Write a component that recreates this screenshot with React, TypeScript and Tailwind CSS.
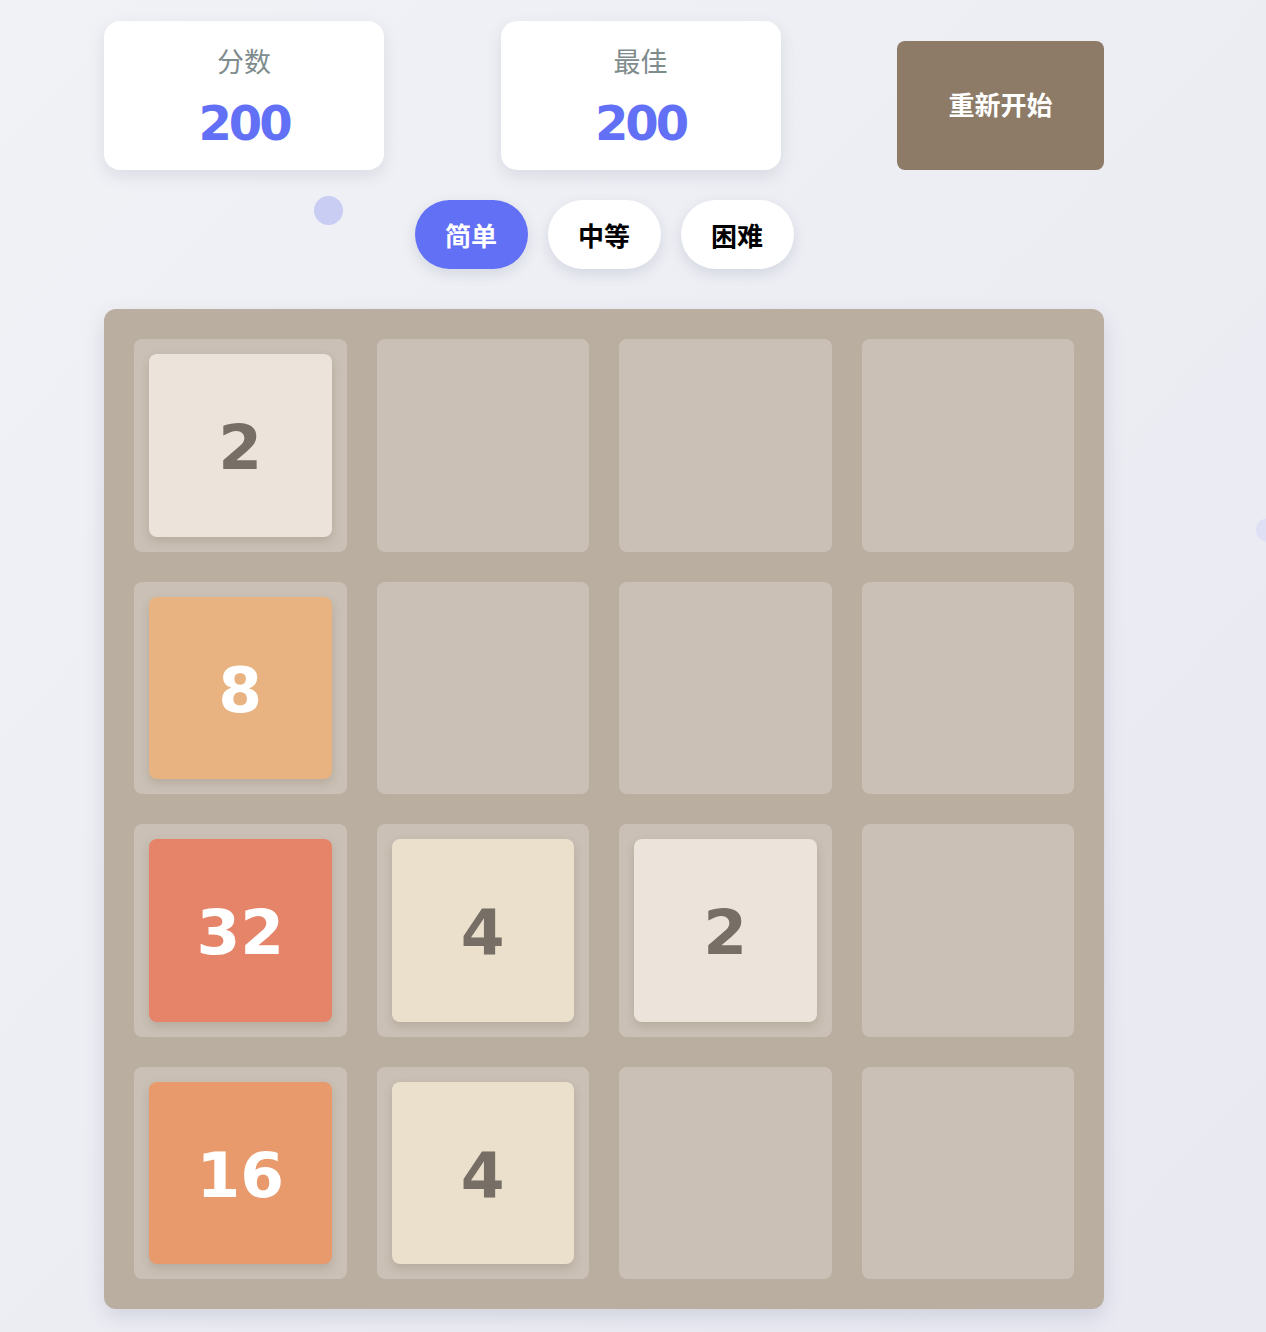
import React from 'react'

type Tile = { value: number; bg: string; fg: string }

const tileStyles: Record<number, Tile> = {
  2: { value: 2, bg: 'bg-[#ece4da]', fg: 'text-[#776e65]' },
  4: { value: 4, bg: 'bg-[#eae0cb]', fg: 'text-[#776e65]' },
  8: { value: 8, bg: 'bg-[#e9b381]', fg: 'text-white' },
  16: { value: 16, bg: 'bg-[#e89a6c]', fg: 'text-white' },
  32: { value: 32, bg: 'bg-[#e68469]', fg: 'text-white' },
}

// 0 = empty cell
const board = [
  [2, 0, 0, 0],
  [8, 0, 0, 0],
  [32, 4, 2, 0],
  [16, 4, 0, 0],
]

const numFont = "font-['DejaVu_Sans',sans-serif]"
const cjkFont = "font-['Noto_Sans_CJK_SC','Noto_Sans',sans-serif]"

const ScoreCard = ({ label, value }: { label: string; value: number }) => (
  <div className="w-[280px] h-[149px] bg-white rounded-[16px] shadow-[0_6px_16px_rgba(60,70,110,0.12)] flex flex-col items-center pt-[22px]">
    <div className={`${cjkFont} text-[27px] leading-[36px] text-[#7f8c8d]`}>{label}</div>
    <div className={`${numFont} mt-[16px] text-[48px] leading-[56px] font-bold text-[#6270f5] tracking-[-3px]`}>
      {value}
    </div>
  </div>
)

const DiffButton = ({ label, active }: { label: string; active?: boolean }) => (
  <button
    className={`${cjkFont} w-[113px] h-[69px] rounded-full text-[26px] font-bold shadow-[0_5px_14px_rgba(60,70,110,0.14)] ${
      active ? 'bg-[#6270f5] text-white' : 'bg-white text-black'
    }`}
  >
    {label}
  </button>
)

export default function App() {
  return (
    <div className="relative min-h-screen overflow-hidden bg-gradient-to-br from-[#f1f2f6] to-[#e8e9f1]">
      {/* floating dots */}
      <div className="absolute left-[314px] top-[196px] w-[29px] h-[29px] rounded-full bg-[#c9cdf4]" />
      <div className="absolute left-[1256px] top-[518px] w-[24px] h-[24px] rounded-full bg-[#dfe0f6]" />

      <div className="relative w-[1000px] ml-[104px] pt-[21px] pb-[23px]">
        <div className="flex justify-between items-end">
          <ScoreCard label="分数" value={200} />
          <ScoreCard label="最佳" value={200} />
          <button
            className={`${cjkFont} w-[207px] h-[129px] pb-[4px] rounded-[8px] bg-[#8d7b68] text-white text-[26px] font-bold`}
          >
            重新开始
          </button>
        </div>

        <div className="mt-[30px] flex justify-center gap-5">
          <DiffButton label="简单" active />
          <DiffButton label="中等" />
          <DiffButton label="困难" />
        </div>

        <div className="mt-[40px] w-[1000px] h-[1000px] bg-[#baaea1] rounded-[12px] p-[30px] grid grid-cols-4 grid-rows-4 gap-[30px] shadow-[0_8px_20px_rgba(60,70,110,0.15)]">
          {board.flat().map((v, i) => {
            const t = tileStyles[v]
            return (
              <div key={i} className="bg-[#cac0b5] rounded-[8px] p-[15px]">
                {t && (
                  <div
                    className={`${t.bg} ${t.fg} ${numFont} w-full h-full pt-[6px] rounded-[8px] flex items-center justify-center text-[63px] font-bold shadow-[0_4px_10px_rgba(90,70,50,0.18)]`}
                  >
                    {t.value}
                  </div>
                )}
              </div>
            )
          })}
        </div>
      </div>
    </div>
  )
}
